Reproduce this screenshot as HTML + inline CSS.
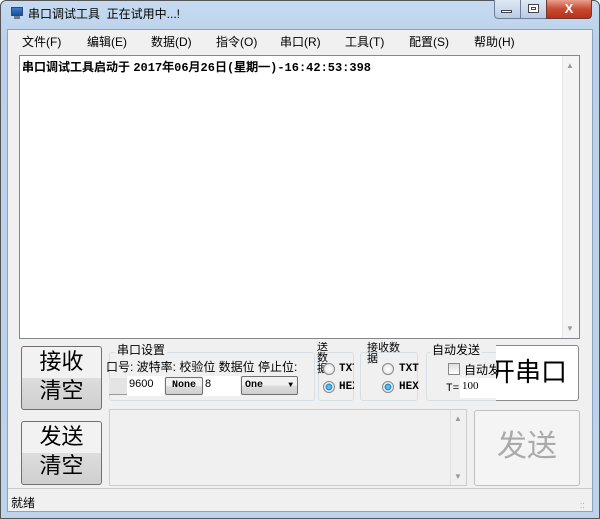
<!DOCTYPE html>
<html><head><meta charset="utf-8"><style>
*{margin:0;padding:0;box-sizing:border-box}
body{width:600px;height:519px;overflow:hidden;background:#fff;font-family:"Liberation Sans","Noto Sans CJK SC","WenQuanYi Zen Hei",sans-serif;font-size:12px;position:relative}
.a{position:absolute}
.frame{left:0;top:0;width:600px;height:519px;border-radius:6px 6px 0 0;background:linear-gradient(#c6dbf1,#b9d1ea 40px,#bdd3ec);border:1px solid #555}
.client{left:7px;top:29px;width:586px;height:483px;background:#f0f0f0;border:1px solid #8aa3bf}
.menu span{position:absolute;top:0;font-size:12px;color:#000}
.btn{border:1px solid #707070;border-radius:3px;background:linear-gradient(#f2f2f2 50%,#dddddd 50%,#cfcfcf);text-align:center}
.gb{border:1px solid #d5dfe5;border-radius:3px}
.cap{background:#f0f0f0;font-size:12px;line-height:12px;padding:0 2px}
.rad{width:12px;height:12px;border-radius:50%;border:1px solid #888;background:radial-gradient(#fff,#ddd)}
.rad.on{background:radial-gradient(#4ac0ff 25%,#1a6fb0 45%,#eee 50%)}
.mono{font-family:"Liberation Mono",monospace;font-size:11px}
</style></head><body>
<div class="a frame"></div>
<!-- title -->
<div class="a" style="left:11px;top:7px;width:12px;height:9px;background:linear-gradient(#3a7ed0,#1c4f94);border:1px solid #2a4a80"></div>
<div class="a" style="left:14px;top:16px;width:6px;height:3px;background:#778"></div>
<div class="a" style="left:28px;top:5px;font-size:12px;color:#000">串口调试工具&nbsp;&nbsp;正在试用中...!</div>
<div class="a" style="left:494px;top:0;width:27px;height:19px;border:1px solid #6d7e96;border-top:none;border-radius:0 0 0 4px;background:linear-gradient(#dfe9f5,#b9cbe2)"></div>
<div class="a" style="left:501px;top:10px;width:11px;height:3px;background:#fff;border:1px solid #445"></div>
<div class="a" style="left:520px;top:0;width:27px;height:19px;border:1px solid #6d7e96;border-top:none;background:linear-gradient(#dfe9f5,#b9cbe2)"></div>
<div class="a" style="left:528px;top:4px;width:11px;height:9px;border:1px solid #445;background:#fff;box-shadow:inset 0 0 0 2px #fff,inset 0 0 0 3px #445"></div>
<div class="a" style="left:546px;top:0;width:46px;height:19px;border:1px solid #6d3a30;border-top:none;border-radius:0 0 4px 0;background:linear-gradient(#e8a090,#c74a32 50%,#b8301c);color:#fff;font-weight:bold;text-align:center;font-size:13px;line-height:17px">X</div>
<div class="a client"></div>
<div class="a menu" style="left:8px;top:33px;width:584px;height:20px">
<span style="left:14px">文件(F)</span><span style="left:79px">编辑(E)</span><span style="left:143px">数据(D)</span><span style="left:208px">指令(O)</span><span style="left:272px">串口(R)</span><span style="left:337px">工具(T)</span><span style="left:401px">配置(S)</span><span style="left:466px">帮助(H)</span>
</div>
<!-- receive text -->
<div class="a" style="left:19px;top:55px;width:561px;height:284px;background:#fff;border:1px solid #828790"></div>
<div class="a" style="left:562px;top:56px;width:17px;height:282px;background:#f4f4f4;border-left:1px solid #e6e6e6"></div>
<div class="a" style="left:566px;top:61px;font-size:8px;color:#999">▲</div>
<div class="a" style="left:566px;top:324px;font-size:8px;color:#999">▼</div>
<div class="a" style="left:22px;top:58px;font-weight:bold;font-size:12px">串口调试工具启动于 <span style="font-family:'Liberation Mono',monospace">2017年06月26日(星期一)-16:42:53:398</span></div>
<!-- buttons -->
<div class="a btn" style="left:21px;top:346px;width:81px;height:64px;font-size:22px;line-height:29px">接收<br>清空</div>
<div class="a btn" style="left:21px;top:421px;width:81px;height:64px;font-size:22px;line-height:29px">发送<br>清空</div>
<!-- serial group -->
<div class="a gb" style="left:109px;top:352px;width:206px;height:49px"></div>
<div class="a cap" style="left:115px;top:344px">串口设置</div>
<div class="a" style="left:106px;top:358px;width:210px;overflow:hidden;white-space:nowrap;font-size:12px">口号: 波特率: 校验位 数据位 停止位:</div>
<div class="a" style="left:109px;top:378px;width:19px;height:17px;background:#e4e4e4;border-bottom:1px solid #999"></div>
<div class="a" style="left:127px;top:376px;width:37px;height:20px;background:#fff;padding:2px 0 0 2px;font-size:11px">9600</div>
<div class="a btn mono" style="left:165px;top:377px;width:38px;height:18px;border-radius:2px;font-weight:bold;line-height:16px;font-size:10px">None</div>
<div class="a" style="left:203px;top:376px;width:37px;height:20px;background:#fff;padding:2px 0 0 2px;font-size:11px">8</div>
<div class="a btn mono" style="left:241px;top:376px;width:57px;height:19px;border-radius:2px;font-weight:bold;line-height:17px;text-align:left;padding-left:3px;font-size:10px">One<span style="position:absolute;right:4px;font-size:8px">▼</span></div>
<!-- send format -->
<div class="a gb" style="left:318px;top:352px;width:36px;height:49px"></div>
<div class="a" style="left:317px;top:342px;font-size:11px;line-height:11px;width:20px;overflow:hidden">送数<br>据</div>
<div class="a rad" style="left:323px;top:363px"></div><div class="a mono" style="left:339px;top:363px;font-weight:bold;width:15px;overflow:hidden">TXT</div>
<div class="a rad on" style="left:323px;top:381px"></div><div class="a mono" style="left:339px;top:381px;font-weight:bold;width:15px;overflow:hidden">HEX</div>
<!-- recv format -->
<div class="a gb" style="left:360px;top:352px;width:58px;height:49px"></div>
<div class="a" style="left:367px;top:343px;font-size:11px;line-height:11px">接收数<br>据</div>
<div class="a rad" style="left:382px;top:363px"></div><div class="a mono" style="left:399px;top:363px;font-weight:bold">TXT</div>
<div class="a rad on" style="left:382px;top:381px"></div><div class="a mono" style="left:399px;top:381px;font-weight:bold">HEX</div>
<!-- auto send -->
<div class="a gb" style="left:426px;top:352px;width:72px;height:49px"></div>
<div class="a cap" style="left:430px;top:344px">自动发送</div>
<div class="a" style="left:448px;top:363px;width:12px;height:12px;border:1px solid #888;background:linear-gradient(#ddd,#fff)"></div>
<div class="a" style="left:464px;top:361px;width:34px;overflow:hidden;white-space:nowrap">自动发送</div>
<div class="a mono" style="left:446px;top:383px">T=</div>
<div class="a" style="left:460px;top:378px;width:36px;height:20px;background:#fff;padding:2px 0 0 2px;font-size:11px;font-family:'Liberation Serif',serif">100</div>
<!-- open port -->
<div class="a" style="left:496px;top:345px;width:83px;height:56px;background:#fff;border:1px solid #8a8a8a;border-left:none;border-radius:0 3px 3px 0;overflow:hidden;font-size:26px;line-height:52px;white-space:nowrap;direction:rtl;padding-right:11px">开串口</div>
<!-- send box -->
<div class="a" style="left:109px;top:409px;width:358px;height:77px;border:1px solid #cdcdcd;background:#f0f0f0"></div>
<div class="a" style="left:450px;top:410px;width:16px;height:75px;background:#f0f0f0;border-left:1px solid #e0e0e0"></div>
<div class="a" style="left:454px;top:414px;font-size:8px;color:#999">▲</div>
<div class="a" style="left:454px;top:472px;font-size:8px;color:#999">▼</div>
<div class="a" style="left:474px;top:410px;width:106px;height:76px;border:1px solid #c0c0c0;border-radius:3px;background:#f4f4f4;color:#aaa;font-size:30px;text-align:center;line-height:72px">发送</div>
<!-- status -->
<div class="a" style="left:8px;top:488px;width:584px;height:1px;background:#c8c8c8"></div>
<div class="a" style="left:11px;top:494px;font-size:12px">就绪</div>
<div class="a" style="left:580px;top:500px;font-size:8px;color:#999;line-height:4px">..<br>..</div>
</body></html>
